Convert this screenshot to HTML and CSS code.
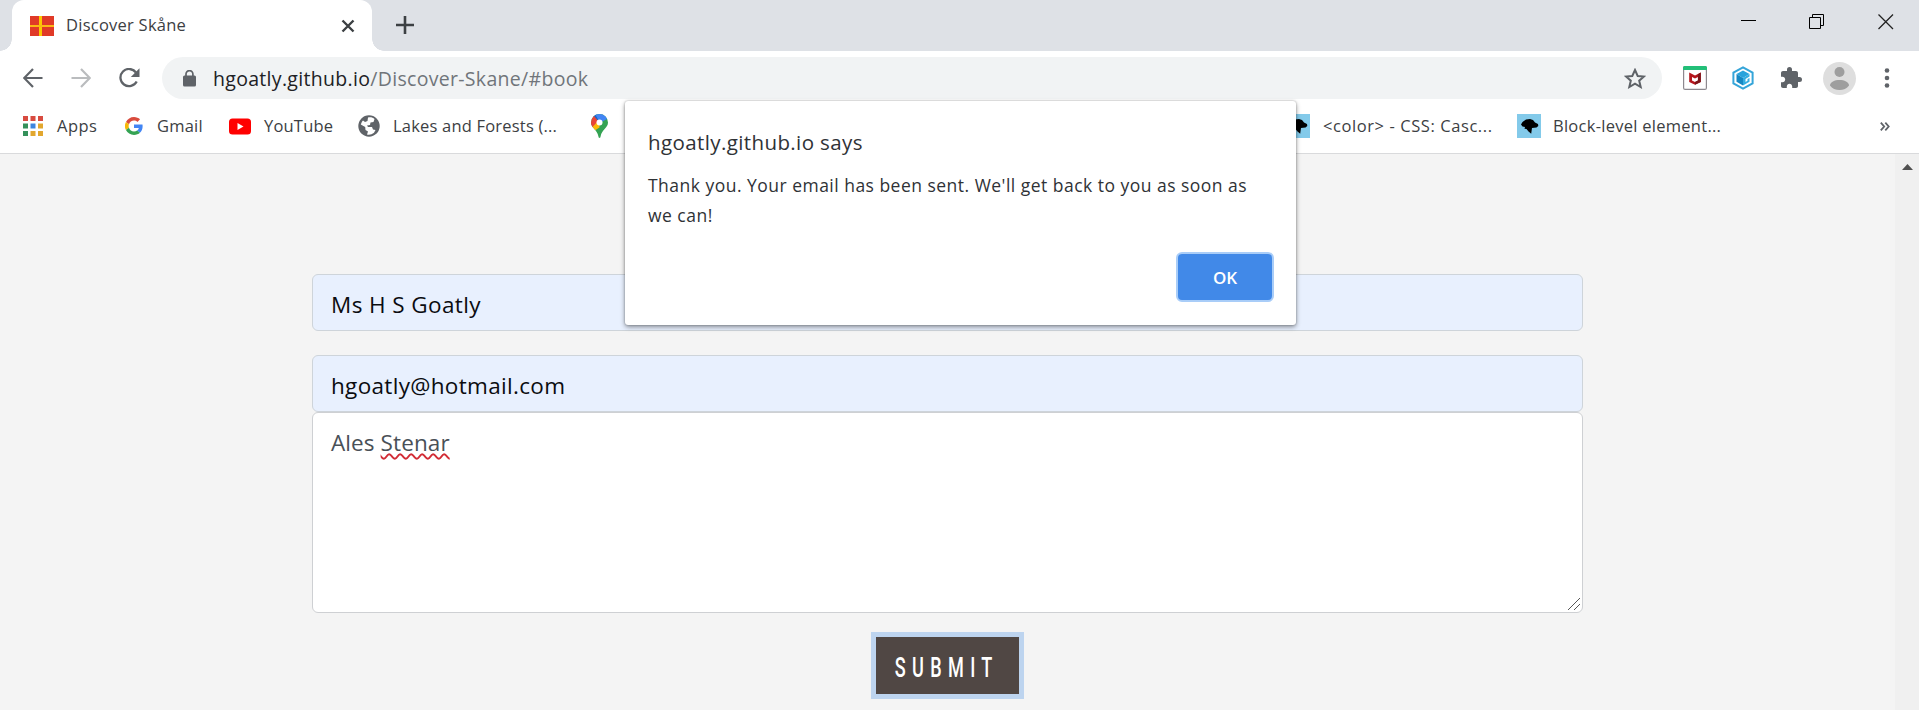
FILE: index.html
```
<!DOCTYPE html>
<html lang="en">
<head>
<meta charset="utf-8">
<title>Discover Skåne</title>
<link rel="stylesheet" href="styles.css">
</head>
<body>
<div class="browser">
  <header class="tabstrip">
    <div class="tab">
      <svg class="flag" width="24" height="20" viewBox="0 0 24 20"><path fill="#e03a27" d="M0 0h24v20H0z"/><path fill="#fcc800" d="M9 0h3v20H9z"/><path fill="#fcb814" d="M0 9h24v2H0z"/></svg>
      <span class="tab-title">Discover Skåne</span>
      <svg class="tab-close" width="14" height="14" viewBox="0 0 14 14"><path d="M1.500 1.500l11 11M12.500 1.500l-11 11" stroke="#3c4043" stroke-width="2.400"/></svg>
      <i class="curve curve-left"></i><i class="curve curve-right"></i>
    </div>
    <svg class="new-tab" width="18" height="18" viewBox="0 0 18 18"><path d="M9 0v18M0 9h18" stroke="#3c4043" stroke-width="2.600"/></svg>
    <div class="window-controls">
      <svg width="16" height="16" viewBox="0 0 16 16"><path d="M1 6.500h15" stroke="#000" stroke-width="1"/></svg>
      <svg width="16" height="16" viewBox="0 0 16 16" fill="none" stroke="#000"><path d="M.5 3.500h11v11H.5zM3.500 3.500v-3h11v11h-3"/></svg>
      <svg width="16" height="16" viewBox="0 0 16 16"><path d="M.5 .5l14.500 14.500M15 .5L.5 15" stroke="#222" stroke-width="1.300"/></svg>
    </div>
  </header>

  <div class="toolbar">
    <nav class="nav">
      <svg width="20" height="20" viewBox="0 0 20 20" fill="none" stroke="#5f6368" stroke-width="2.200"><path d="M19.500 10H1.500M10 1L1.200 10l8.800 9"/></svg>
      <svg width="20" height="20" viewBox="0 0 20 20" fill="none" stroke="#babcbe" stroke-width="2.200"><path d="M.5 10h18M10 1l8.800 9-8.800 9"/></svg>
      <svg width="22" height="20" viewBox="0 0 22 20"><path d="M17 4.500A8.600 8.600 0 1 0 17.700 13.500" fill="none" stroke="#5f6368" stroke-width="2.300"/><path d="M20.500 .3v8.700h-8.700z" fill="#5f6368"/></svg>
    </nav>
    <div class="omnibox">
      <svg class="lock" width="13" height="17" viewBox="0 0 13 17"><rect y="5.500" width="13" height="11" rx="1.500" fill="#5f6368"/><path d="M3 7V4a3.400 3.400 0 0 1 6.900 0v3" fill="none" stroke="#5f6368" stroke-width="1.700"/></svg>
      <span class="url"><b>hgoatly.github.io</b>/Discover-Skane/#book</span>
      <svg class="star" width="22" height="21" viewBox="0 0 22 21"><path d="M11 2l2.700 6 6.300.5-4.800 4.200 1.500 6.300L11 15.600 5.300 19l1.500-6.300L2 8.500 8.300 8z" fill="none" stroke="#5f6368" stroke-width="2"/></svg>
    </div>
    <div class="extensions">
      <svg width="24" height="24" viewBox="0 0 24 24"><rect x=".6" y=".6" width="22.800" height="22.800" rx="1.500" fill="#fff" stroke="#8d898f" stroke-width="1.200"/><path d="M0 1.500Q0 0 1.500 0h21Q24 0 24 1.500V4H0z" fill="#22bf78"/><path d="M6.200 6.500L12 9.500l5.800-3V16L12 18.800 6.200 16z" fill="#b5161d"/><path d="M9 11l3 1.500 3-1.500v3.500L12 16l-3-1.500z" fill="#fff"/><path d="M14.900 8.200l2.900-1.700V16L12 18.800V16l2.900-1.500z" fill="#7c1519"/></svg>
      <svg width="24" height="24" viewBox="0 0 24 24"><path d="M12 1.300l9.600 5.400v10.600L12 22.700 2.400 17.300V6.700z" fill="#fff" stroke="#35a5d9" stroke-width="2"/><path d="M12 4.500l6.500 3.500-6.500 4-6.500-4z" fill="#29a3dc"/><path d="M5.500 8l6.500 4v7.500l-6.500-3.700z" fill="#1688c3"/><path d="M12 12l6.500-4v2.500L14.500 13v3l2-1.200V13l2-1v3.800L12 19.500z" fill="#36aee1"/></svg>
      <svg width="24" height="24" viewBox="0 0 24 24"><path fill="#5f6368" d="M20.500 11H19V7c0-1.100-.9-2-2-2h-4V3.500a2.500 2.500 0 0 0-5 0V5H4c-1.100 0-2 .9-2 2v3.800h1.500c1.500 0 2.700 1.200 2.700 2.700s-1.200 2.700-2.700 2.700H2V20c0 1.100.9 2 2 2h3.800v-1.500c0-1.500 1.200-2.700 2.700-2.700s2.700 1.200 2.700 2.700V22H17c1.100 0 2-.9 2-2v-4h1.500a2.500 2.500 0 0 0 0-5z"/></svg>
      <svg class="avatar" width="33" height="33" viewBox="0 0 33 33"><circle cx="16.500" cy="16.500" r="16.500" fill="#dedede"/><circle cx="16.500" cy="10" r="5" fill="#9e9e9e"/><path d="M7 23.500c0-7.500 19-7.500 19 0-4 6-15 6-19 0z" fill="#9e9e9e"/></svg>
      <svg width="6" height="20" viewBox="0 0 6 20" fill="#5f6368"><circle cx="3" cy="2.500" r="2.300"/><circle cx="3" cy="10" r="2.300"/><circle cx="3" cy="17.500" r="2.300"/></svg>
    </div>
  </div>

  <nav class="bookmarks">
    <a class="bm bm-apps"><svg width="20" height="20" viewBox="0 0 20 20"><path fill="#d84b40" d="M0 0h5v5H0zM7.500 0h5v5h-5zM15 0h5v5h-5z"/><path fill="#35915b" d="M0 7.500h5v5H0zM0 15h5v5H0z"/><path fill="#3d85de" d="M7.500 7.500h5v5h-5z"/><path fill="#e2a72e" d="M15 7.500h5v5h-5zM7.500 15h5v5h-5zM15 15h5v5h-5z"/></svg><span>Apps</span></a>
    <a class="bm bm-gmail"><svg width="18" height="18" viewBox="0 0 48 48"><path fill="#d94b3d" d="M24 9.500c3.500 0 6.700 1.200 9.200 3.600l6.900-6.900C35.900 2.400 30.500 0 24 0 14.600 0 6.500 5.400 2.600 13.200l8 6.200C12.400 13.700 17.700 9.500 24 9.500z"/><path fill="#4285f4" d="M47 24.500c0-1.600-.2-3.100-.4-4.500H24v9h12.900c-.6 3-2.300 5.500-4.800 7.200l7.700 6C44.400 38 47 31.800 47 24.500z"/><path fill="#f7b806" d="M10.500 28.600a14.500 14.500 0 0 1 0-9.200l-8-6.200a24 24 0 0 0 0 21.600z"/><path fill="#34a353" d="M24 48c6.500 0 12-2.100 15.900-5.800l-7.700-6c-2.200 1.500-4.900 2.300-8.200 2.300-6.300 0-11.600-4.200-13.500-9.900l-8 6.200C6.500 42.600 14.600 48 24 48z"/></svg><span>Gmail</span></a>
    <a class="bm bm-youtube"><svg width="22" height="17" viewBox="0 0 22 17"><rect y=".5" width="22" height="16" rx="3.500" fill="#f00"/><path d="M8.500 5l6 3.500-6 3.500z" fill="#fff"/></svg><span>YouTube</span></a>
    <a class="bm bm-lakes"><svg width="22" height="22" viewBox="0 0 22 22"><circle cx="11" cy="11" r="10.700" fill="#5f6368"/><path d="M10 2.500c2.500-.7 5 0 6.500 1.500l-1 3-3 .5-.5 2.500-3 .5 1 1.500h4l1 2.500 2.500.5-1.500 2.800c-2 1.700-4.500 2.200-7 1.700l1-3-2.500-1.500-.3-3L2.800 9.500C3.300 8 4 6.500 5 5.500l2 1.500 2.500-1z" fill="#fff"/></svg><span>Lakes and Forests (...</span></a>
    <a class="bm bm-maps"><svg width="17" height="24" viewBox="0 0 17 24"><defs><clipPath id="pin"><path d="M8.500 0A8.500 8.500 0 0 0 0 8.500C0 14 6.500 16 7.300 22q.2 2 1.200 2t1.200-2C10.500 16 17 14 17 8.500A8.500 8.500 0 0 0 8.500 0z"/></clipPath></defs><g clip-path="url(#pin)"><path fill="#34a353" d="M0 0h17v24H0z"/><path fill="#4285f4" d="M2 0h15v4.500L8.500 9z"/><path fill="#1a63c5" d="M0 0h4l4.500 8-5-4z"/><path fill="#e84435" d="M0 3l3-1 5.500 6.500L2 14H0z"/><path fill="#fbb906" d="M1 13.500l7.500-8v8L3 17z"/></g><circle cx="8.500" cy="8.500" r="3" fill="#fff"/></svg></a>
    <a class="bm bm-color"><svg width="24" height="24" viewBox="0 0 24 24"><path fill="#83caea" d="M0 0h24v24H0z"/><path d="M4 10.500l1.500-2.500L9 5.500 13 5l3 1 2 2.500 3 1.500.3 2-1.800 1.500-4.500.5-.8 5.800-2.700-2.300L9.500 15l-2-.3.500-1.700-2.500-.5z"/></svg><span>&lt;color&gt; - CSS: Casc...</span></a>
    <a class="bm bm-block"><svg width="24" height="24" viewBox="0 0 24 24"><path fill="#83caea" d="M0 0h24v24H0z"/><path d="M4 10.500l1.500-2.500L9 5.500 13 5l3 1 2 2.500 3 1.500.3 2-1.800 1.500-4.500.5-.8 5.800-2.700-2.300L9.500 15l-2-.3.500-1.700-2.500-.5z"/></svg><span>Block-level element...</span></a>
    <svg class="more" width="10" height="9" viewBox="0 0 10 9"><path d="M.8 .6l3.400 3.900L.8 8.400M5.300 .6l3.400 3.900-3.400 3.900" fill="none" stroke="#5f6368" stroke-width="1.800"/></svg>
  </nav>

  <main class="page">
    <form class="form">
      <div class="field"><span class="t-name">Ms H S Goatly</span></div>
      <div class="field"><span class="t-mail">hgoatly@hotmail.com</span></div>
      <div class="message"><span class="t-msg">Ales <u>Stenar</u></span>
        <svg class="grip" width="12" height="12" viewBox="0 0 12 12"><path d="M0 12L12 0M6 12l6-6" stroke="#555" stroke-width="1"/></svg>
      </div>
      <button class="submit" type="button"><span>SUBMIT</span></button>
    </form>
    <div class="scrollbar"><svg width="11" height="6" viewBox="0 0 11 6"><path d="M0 6l5.500-6L11 6z" fill="#505050"/></svg></div>
  </main>

  <div class="dialog">
    <h1>hgoatly.github.io says</h1>
    <p><span class="line1">Thank you. Your email has been sent. We'll get back to you as soon as</span><br><span class="line2">we can!</span></p>
    <button class="ok" type="button">OK</button>
  </div>
</div>
</body>
</html>
```
FILE: styles.css
```
* { box-sizing: border-box; }
body { margin: 0; background: #f4f4f4; font-family: "Open Sans", "Noto Sans", sans-serif; color: #3c4043; overflow: hidden; }
svg { display: block; flex: none; }
span { white-space: nowrap; }
.browser { position: relative; width: 1919px; height: 710px; display: flex; flex-direction: column; overflow: hidden; }

.tabstrip { height: 51px; background: #dee1e6; display: flex; padding-left: 12px; flex: none; }
.tab { position: relative; width: 360px; background: #fff; border-radius: 12px 12px 0 0; display: flex; align-items: center; padding: 0 17px 0 18px; }
.tab-title { font-size: 16.500px; margin-left: 12px; letter-spacing: .25px; flex: 1; padding-bottom: 2px; }
.curve { position: absolute; bottom: 0; width: 12px; height: 12px; }
.curve-left { left: -12px; background: radial-gradient(circle at 0 0, #dee1e6 11.500px, #fff 12px); }
.curve-right { right: -12px; background: radial-gradient(circle at 100% 0, #dee1e6 11.500px, #fff 12px); }
.new-tab { margin: 16px 0 0 24px; }
.window-controls { margin-left: auto; padding: 14px 25px 0 0; display: flex; gap: 53px; }

.toolbar { height: 48px; padding-top: 6px; background: #fff; display: flex; flex: none; }
.nav { width: 162px; padding: 11px 0 0 23px; display: flex; gap: 28px; }
.omnibox { width: 1500px; height: 42px; border-radius: 21px; background: #f1f3f4; display: flex; align-items: center; padding: 0 16px 0 21px; }
.lock { margin-top: 0; }
.url { font-size: 19.500px; letter-spacing: .31px; color: #70757a; margin-left: 17px; flex: 1; }
.url b { font-weight: 400; color: #202124; }
.extensions { display: flex; align-items: center; margin-left: 21px; gap: 24px; height: 42px; }
.avatar { margin: 0 4px 0 -4px; }

.bookmarks { height: 55px; background: #fff; border-bottom: 1px solid #d9dadc; display: flex; align-items: center; padding: 0 29px 0 23px; flex: none; font-size: 16.500px; }
.bm { display: flex; align-items: center; flex: none; letter-spacing: .2px; }
.bm span { margin-left: 13px; padding-bottom: 1px; }
.bm-apps { width: 102px; letter-spacing: .5px; }
.bm-apps span { margin-left: 14px; }
.bm-gmail { width: 104px; }
.bm-gmail span { margin-left: 14px; }
.bm-youtube { width: 129px; }
.bm-lakes { width: 233px; }
.bm-maps { width: 695px; }
.bm-color { width: 231px; letter-spacing: .58px; }
.bm-block { letter-spacing: .27px; }
.bm-block span { margin-left: 12px; }
.more { margin-left: auto; }

.page { flex: 1; display: flex; background: #f4f4f4; }
.form { width: 1271px; margin: 120px auto 0 312px; display: flex; flex-direction: column; }
.field { height: 57px; border: 1px solid #ced4da; border-radius: 6px; background: #e8f0fe; padding: 4px 19px 0 18px; display: flex; align-items: center; margin-bottom: 24px; font-size: 22.500px; color: #0b0c10; }
.field + .field { margin-bottom: 0; }
.t-name { letter-spacing: .4px; }
.t-mail { letter-spacing: .32px; }
.message { position: relative; height: 201px; border: 1px solid #ced0d3; border-radius: 6px; background: #fff; padding: 13px 19px 0 18px; font-size: 22.500px; letter-spacing: .1px; line-height: 34px; color: #495057; }
.message u { text-decoration: underline wavy #d22b35 1.500px; text-underline-offset: 2px; text-decoration-skip-ink: none; }
.grip { position: absolute; right: 2px; bottom: 2px; }
.submit { align-self: center; width: 153px; height: 67px; margin-top: 19px; border: 5px solid #bdd4ef; border-radius: 0; background: #504744; color: #fff; padding: 0; font: 500 27px Roboto, sans-serif; }
.submit span { display: inline-block; transform: scaleX(.67); letter-spacing: 9.500px; margin: 4px -27px 0 -28px; }

.scrollbar { width: 24px; background: #f0f0f0; padding: 10px 0 0 7px; }

.dialog { position: absolute; left: 625px; top: 101px; width: 671px; height: 224px; background: #fff; border-radius: 3px; box-shadow: 0 2px 5px rgba(0,0,0,.42), 0 0 2px rgba(0,0,0,.3); padding: 24px 22px 0 23px; color: #2f3236; }
.dialog h1 { font-size: 20.500px; letter-spacing: .39px; font-weight: 400; line-height: 34px; margin: 0; white-space: nowrap; }
.dialog p { font-size: 17.500px; letter-spacing: .48px; line-height: 30px; margin: 11px 0 0; white-space: nowrap; }
.ok { display: block; width: 98px; height: 50px; margin: 22px 0 0 auto; border: 2px solid #a9cdf8; border-radius: 6px; background: #4189e8; color: #fff; font: 600 17px "Open Sans", sans-serif; padding: 0; }
```
